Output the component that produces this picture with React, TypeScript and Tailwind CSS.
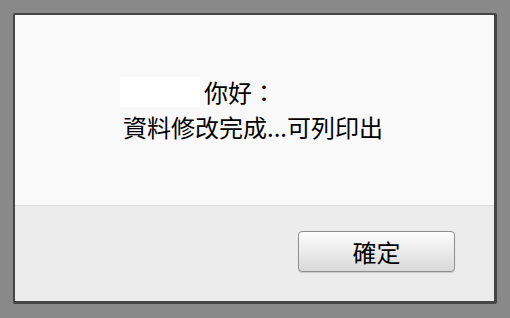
import React from "react";

export default function App() {
  const font = { fontFamily: '"Noto Sans CJK TC", "Noto Sans", sans-serif' };
  return (
    <div className="w-[510px] h-[318px] bg-[#898989] pt-[13px] pl-[13px]" style={font}>
      <div className="w-[484px] h-[291px] flex flex-col border-l-2 border-t-2 border-r-[3px] border-b-[3px] border-[#454545] rounded-[2px] overflow-hidden">
        <div className="h-[191px] bg-[#f9f9f9] border-b border-[#dcdcdc] pl-[105px] pt-[62px] text-[24px] text-black">
          <div className="flex items-center h-[30px]">
            <div className="w-[80px] h-[30px] bg-white" />
            <span className="ml-[4px] leading-[30px]">你好：</span>
          </div>
          <div className="mt-[5px] ml-[3px] leading-[30px] whitespace-nowrap">資料修改完成...可列印出</div>
        </div>
        <div className="flex-1 bg-[#ececec] flex justify-end items-start pr-[39px] pt-[25px]">
          <button className="w-[157px] h-[41px] rounded-[4px] border border-[#8e8e8e] bg-gradient-to-b from-[#fdfdfd] to-[#d9d9d9] shadow-[0_1px_1px_rgba(0,0,0,0.15)] text-[24px] leading-none text-black flex items-center justify-center">
            確定
          </button>
        </div>
      </div>
    </div>
  );
}
